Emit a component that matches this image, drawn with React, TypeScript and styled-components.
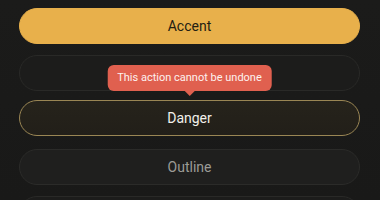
import React from 'react'
import styled, { createGlobalStyle, css } from 'styled-components'

const GlobalStyle = createGlobalStyle`
  html, body {
    margin: 0;
    padding: 0;
    background: #1a1a19;
    font-family: Roboto, "Noto Sans", "Liberation Sans", sans-serif;
  }
`

type Variant = 'accent' | 'ghost' | 'danger' | 'outline'

const Page = styled.div`
  display: flex;
  flex-direction: column;
  gap: 11px;
  padding: 8px 20px 0 19px;
  height: 200px;
  box-sizing: border-box;
  overflow: hidden;
  background: linear-gradient(180deg, #1b1b1a 0%, #191918 100%);
`

const Slot = styled.div`
  position: relative;
  flex-shrink: 0;
`

const variants = {
  accent: css`
    background: #e8b04b;
    border-color: #e8b04b;
    color: #231d12;
  `,
  ghost: css`
    background: #1c1c1b;
    border-color: #292927;
    color: #9a9a96;
  `,
  danger: css`
    background: linear-gradient(180deg, #26231b 0%, #221f19 100%);
    border-color: #9a8654;
    color: #f2f0ea;
    transform: translateY(-2px);
  `,
  outline: css`
    background: #1f1f1e;
    border-color: #2b2b29;
    color: #9c9b96;
  `,
}

const Button = styled.button<{ $variant: Variant }>`
  display: flex;
  flex-shrink: 0;
  align-items: center;
  justify-content: center;
  width: 100%;
  height: 36px;
  border-radius: 18px;
  border: 1px solid;
  font-family: Roboto, "Noto Sans", "Liberation Sans", sans-serif;
  font-size: 14px;
  font-weight: 400;
  padding: 0;
  ${({ $variant }) => variants[$variant]}
`

const Tooltip = styled.div`
  position: absolute;
  left: 50%;
  bottom: calc(100% + 11px);
  transform: translateX(-50%);
  background: #e0604f;
  color: #fdf1ee;
  font-size: 11px;
  line-height: 14px;
  padding: 6px 10px;
  border-radius: 6px;
  white-space: nowrap;
  z-index: 2;

  &::after {
    content: '';
    position: absolute;
    top: 100%;
    left: 50%;
    transform: translateX(-50%);
    border: 5px solid transparent;
    border-top-color: #e0604f;
    border-bottom-width: 0;
  }
`

export default function App() {
  return (
    <>
      <GlobalStyle />
      <Page>
        <Button $variant="accent">Accent</Button>
        <Button $variant="ghost">Ghost</Button>
        <Slot>
          <Tooltip>This action cannot be undone</Tooltip>
          <Button $variant="danger">Danger</Button>
        </Slot>
        <Button $variant="outline">Outline</Button>
        <Button $variant="ghost">Secondary</Button>
      </Page>
    </>
  )
}
